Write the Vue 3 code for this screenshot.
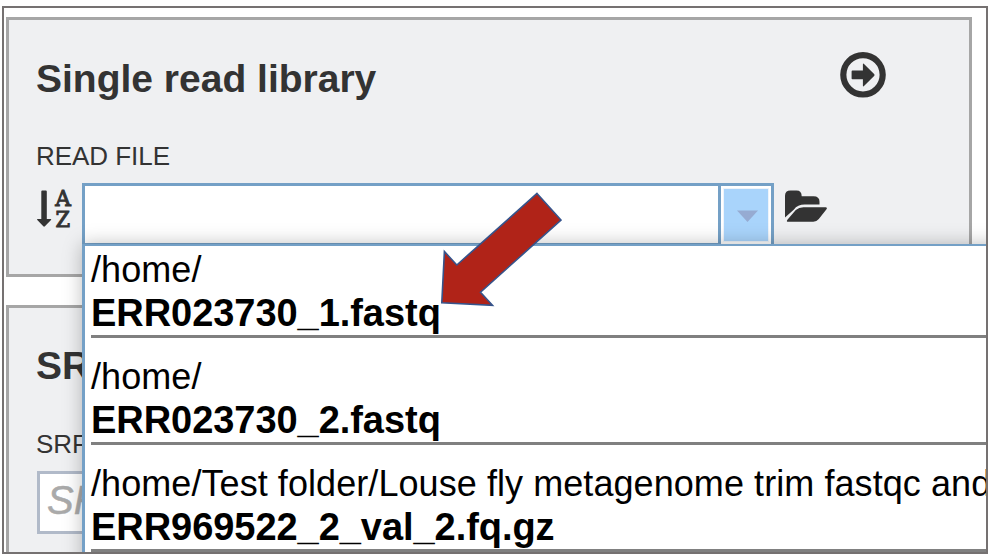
<script setup>
const files = [
  { folder: '/home/', name: 'ERR023730_1.fastq' },
  { folder: '/home/', name: 'ERR023730_2.fastq' },
  { folder: '/home/Test folder/Louse fly metagenome trim fastqc and', name: 'ERR969522_2_val_2.fq.gz' },
]
</script>

<template>
  <div class="page">
    <main class="frame">
      <section class="card single">
        <header class="card-head">
          <h2>Single read library</h2>
          <svg class="go" width="46" height="46" viewBox="0 0 46 46">
            <circle cx="23" cy="22.8" r="19.7" fill="none" stroke="#333" stroke-width="6.2" />
            <path d="M12.4 18.6h10.5v-6.2q0-1.4 1.1-.5l10.1 10q1 1.1 0 2.2l-10.1 10q-1.1.9-1.1-.5v-6.4H12.4q-.8 0-.8-.8v-7q0-.8.8-.8z" fill="#333" />
          </svg>
        </header>
        <label class="label">READ FILE</label>
        <div class="field-row">
          <svg class="sort" width="35" height="40" viewBox="0 0 35 40">
            <path d="M5.2 1.6h3.7q.9 0 .9.9v27.4h3.8q1.2.1.4 1.1l-6.1 6.3q-.8.7-1.6 0L.3 31q-.8-1 .4-1.1h3.6V2.5q0-.9.9-.9z" fill="#333" />
            <text x="18.2" y="17.2" textLength="15.6" lengthAdjust="spacingAndGlyphs">A</text>
            <text x="18.4" y="38.4" textLength="14.6" lengthAdjust="spacingAndGlyphs">Z</text>
          </svg>
          <div class="combo">
            <div class="combo-input"></div>
            <div class="combo-button">
              <svg class="caret" width="21" height="12" viewBox="0 0 21 12"><path d="M0 .5h21L10.5 12z" fill="#96abd2" /></svg>
            </div>
            <div class="menu">
              <div v-for="file in files" :key="file.name" class="item">
                <div class="folder">{{ file.folder }}</div>
                <div class="name">{{ file.name }}</div>
              </div>
            </div>
            <svg class="pointer" width="124" height="118" viewBox="438 190 124 118">
              <path d="M537 193.5 561 220 480.5 292.2 492.5 305.3 441.8 302.7 444.4 251.5 456.8 265z" fill="#b02318" stroke="#35548c" stroke-width="1.6" />
            </svg>
          </div>
          <svg class="open" width="43" height="33" viewBox="0 0 43 33">
            <path d="M0 27.5V5.7Q0 .5 5.5.5h6q5.2 0 5.2 5.7h11.8q6 0 6 5.5v2.9H19.7q-7 0-11 5.1z" fill="#333" />
            <path d="M18.4 17.2h22.2q2.2.2.7 2.4L33.8 29q-2.3 2.8-5.5 2.8H3.3q-2.4-.1-.9-2.1l8.4-9.6q3.2-2.9 7.6-2.9z" fill="#333" />
          </svg>
        </div>
      </section>
      <section class="card srr">
        <header class="card-head"><h2>SR</h2></header>
        <label class="label">SRR</label>
        <div class="accession">SR</div>
      </section>
    </main>
  </div>
</template>

<style>
body { margin: 0; background: #fff; }
</style>

<style scoped>
* { box-sizing: border-box; }
.page {
  width: 998px;
  height: 554px;
  padding: 6px 10px 0 2px;
  overflow: hidden;
  background: #fff;
  font-family: "Liberation Sans", Arial, sans-serif;
  color: #333;
}
.frame {
  height: 548px;
  border: 2px solid #757171;
  padding: 9px 14px 0 2px;
  display: flex;
  flex-direction: column;
  gap: 28px;
  overflow: hidden;
}
.card {
  flex: none;
  border: 3px solid #a6a6a6;
  background: #eff0f2;
  padding: 0 0 0 28px;
}
.single { height: 260px; position: relative; z-index: 1; }
.srr { height: 290px; }
.card-head {
  display: flex;
  justify-content: space-between;
  height: 120px;
  padding: 32px 83px 0 0;
}
h2 {
  margin: 5px 0 0 -1px;
  font-size: 39px;
  line-height: 44px;
  font-weight: 700;
  height: 44px;
}
.srr h2 { margin-top: 4px; }
.label {
  display: block;
  height: 43px;
  margin-left: -1px;
  font-size: 26px;
  line-height: 32px;
  letter-spacing: -.05px;
}
.field-row { display: flex; align-items: flex-start; }
.sort { margin: 6px 10px 0 0; flex: none; overflow: visible; }
.sort text {
  font: 400 21.5px "DejaVu Serif", serif;
  fill: #333;
  stroke: #333;
  stroke-width: 1;
}
.combo {
  position: relative;
  display: flex;
  width: 692px;
  height: 63px;
  border: 3px solid #74a0c6;
  background: #fff;
}
.combo-input { flex: 1; }
.combo-button {
  display: flex;
  align-items: center;
  justify-content: center;
  width: 53px;
  height: 58px;
  border-left: 3px solid #74a0c6;
  background: #a9d4fb;
  box-shadow: inset 0 0 0 2px #fff, inset 0 0 0 3px #eef4fb;
}
.caret { margin: 2px 0 0 3px; }
.open { margin: 7px 0 0 11px; flex: none; }
.menu {
  position: absolute;
  left: -3px;
  top: 58px;
  width: 1000px;
  height: 340px;
  padding: 0 0 0 6px;
  border: 3px solid #74a0c6;
  border-top-width: 2px;
  background: #fff;
  box-shadow: 0 0 18px rgba(0, 0, 0, .26);
  color: #000;
}
.item {
  height: 107px;
  padding-top: 16px;
  border-bottom: 3px solid #808080;
  white-space: nowrap;
}
.item:first-child { height: 92px; padding-top: 1px; }
.folder {
  font-size: 36px;
  line-height: 46px;
  height: 45px;
  letter-spacing: .07px;
}
.name {
  font-size: 38px;
  line-height: 42px;
  font-weight: 700;
  letter-spacing: -.05px;
}
.pointer {
  position: absolute;
  left: 353px;
  top: 4px;
}
.accession {
  width: 500px;
  height: 63px;
  padding-left: 7px;
  border: 3px solid #b1bac9;
  background: #fff;
  color: #aaa;
  font-size: 40px;
  font-style: italic;
  line-height: 53px;
  -webkit-text-stroke: .5px #aaa;
}
</style>
